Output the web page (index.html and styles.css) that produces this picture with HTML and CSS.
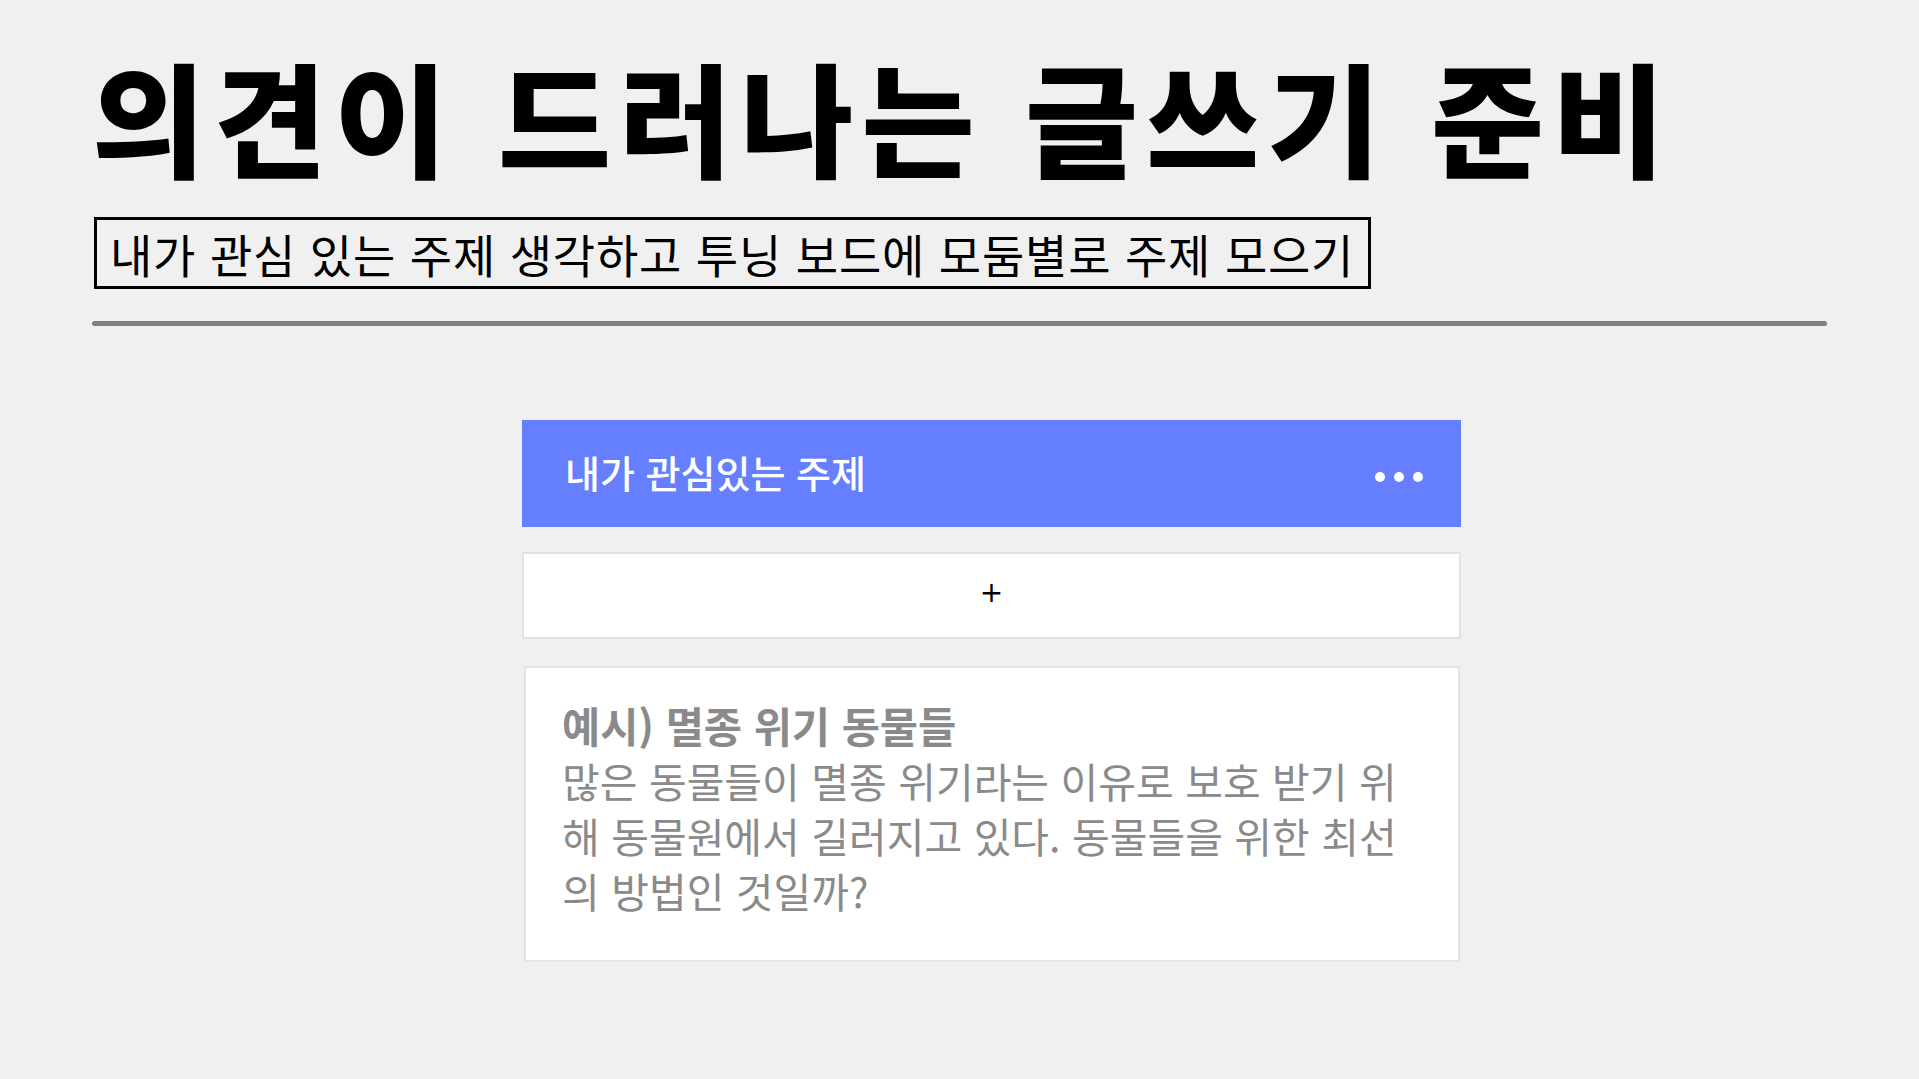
FILE: index.html
```html
<!DOCTYPE html>
<html lang="ko">
<head>
  <meta charset="utf-8">
  <title>의견이 드러나는 글쓰기 준비</title>
  <link rel="stylesheet" href="styles.css">
</head>
<body>
  <header class="intro">
    <h1 class="title">의견이 드러나는 글쓰기 준비</h1>
    <p class="task">내가 관심 있는 주제 생각하고 투닝 보드에 모둠별로 주제 모으기</p>
    <hr class="rule">
  </header>

  <main class="board">
    <section class="column">
      <div class="column-head">
        <h2 class="column-name">내가 관심있는 주제</h2>
        <button class="more" aria-label="더보기">
          <span class="dot"></span><span class="dot"></span><span class="dot"></span>
        </button>
      </div>

      <button class="add">+</button>

      <article class="card">
        <h3 class="card-title">예시) 멸종 위기 동물들</h3>
        <p class="card-text">많은 동물들이 멸종 위기라는 이유로 보호 받기 위해 동물원에서 길러지고 있다. 동물들을 위한 최선의 방법인 것일까?</p>
      </article>
    </section>
  </main>
</body>
</html>
```

FILE: styles.css
```css
body {
  margin: 0;
  background: #f0f0f0;
  font-family: "Noto Sans CJK KR", "Noto Sans", sans-serif;
  color: #000;
}

/* top block */
.intro {
  padding: 53px 92px 0 92px;
}

.title {
  margin: 0;
  font-size: 123px;
  font-weight: 900;
  line-height: 1;
  letter-spacing: 8px;
}

.task {
  display: inline-block;
  margin: 41px 0 0 2px;
  padding: 0 14px 0 13px;
  border: 3px solid #000;
  font-size: 46px;
  font-weight: 400;
  line-height: 66px;
  letter-spacing: 0.8px;
}

.rule {
  margin: 32px 0 0 0;
  height: 5px;
  border: 0;
  border-radius: 3px;
  background: #808080;
}

/* board */
.board {
  padding: 94px 0 0 522px;
}

.column {
  width: 939px;
}

.column-head {
  display: flex;
  align-items: center;
  justify-content: space-between;
  height: 107px;
  padding: 0 38px 0 43px;
  box-sizing: border-box;
  background: #667fff;
  color: #fff;
}

.column-name {
  margin: 0 0 4px 0;
  font-size: 38px;
  font-weight: 500;
}

.more {
  display: flex;
  gap: 9px;
  margin-top: 6px;
  padding: 0;
  border: 0;
  background: none;
  cursor: pointer;
}

.dot {
  width: 10px;
  height: 10px;
  border-radius: 50%;
  background: #fff;
}

.add {
  display: block;
  width: 100%;
  height: 87px;
  margin-top: 25px;
  padding: 0 0 5px 0;
  border: 2px solid #e2e2e2;
  background: #fff;
  color: #000;
  font-family: "DejaVu Sans", sans-serif;
  font-size: 28px;
  line-height: 1;
  cursor: pointer;
}

.card {
  margin: 27px 1px 0 2px;
  padding: 30px 36px 42px 36px;
  border: 2px solid #e4e4e4;
  background: #fff;
  color: #8a8a8a;
}

.card-title {
  margin: 0;
  font-size: 41.5px;
  font-weight: 700;
  line-height: 55px;
}

.card-text {
  margin: 0;
  font-size: 41px;
  font-weight: 400;
  line-height: 55px;
}
```
